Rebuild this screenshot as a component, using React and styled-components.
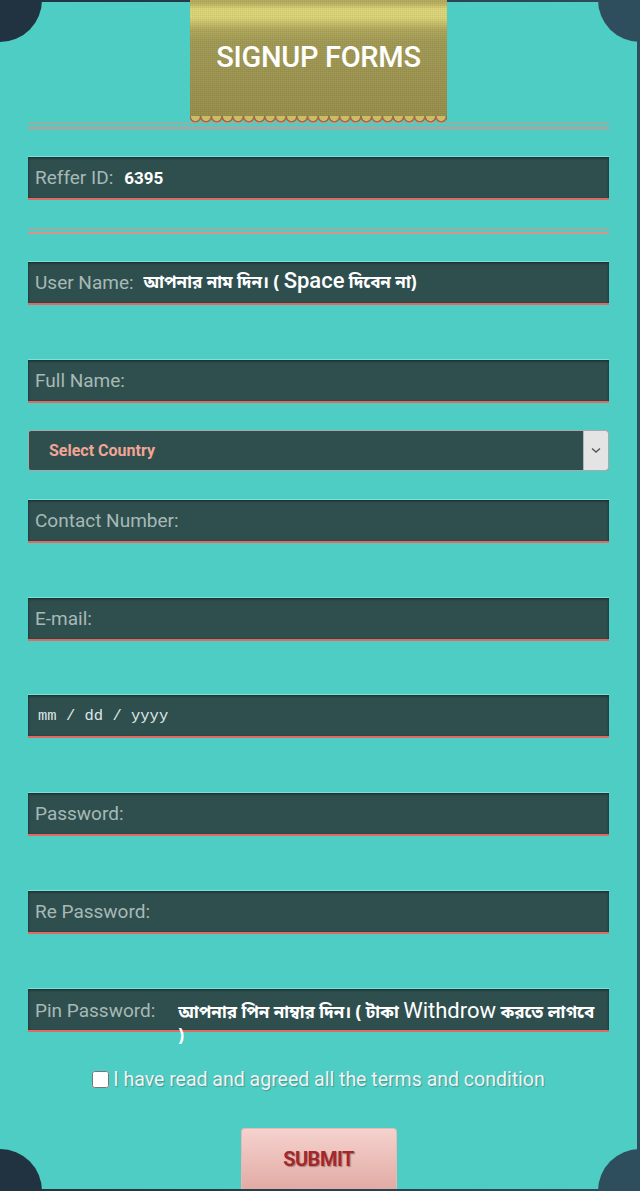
import styled, { createGlobalStyle } from "styled-components";

const GlobalStyle = createGlobalStyle`
  html, body {
    margin: 0;
    padding: 0;
  }
  body {
    background: #213340;
    font-family: Roboto, "Noto Sans", "Noto Sans Bengali", sans-serif;
  }
`;

const Page = styled.div`
  position: relative;
  width: 640px;
  height: 1191px;
  overflow: hidden;
  background: linear-gradient(90deg, #213340, #2e4d5d);
`;

const Corner = styled.span`
  position: absolute;
  width: 84px;
  height: 84px;
  border-radius: 50%;
  background: ${({ $color }) => $color};
  ${({ $v }) => $v}: -42px;
  ${({ $h }) => $h}: -42px;
`;

const Sheet = styled.div`
  box-sizing: border-box;
  display: flex;
  flex-direction: column;
  height: 1187px;
  margin: 2px 3px 0 0;
  padding: 0 28px;
  background: #4ecdc4;
`;

const Banner = styled.div`
  flex: none;
  align-self: center;
  margin-top: -2px;
  width: 257px;
  display: flex;
  flex-direction: column;
`;

const BannerBody = styled.div`
  height: 116px;
  display: flex;
  align-items: center;
  justify-content: center;
  padding-bottom: 2px;
  box-sizing: border-box;
  background:
    repeating-linear-gradient(0deg, rgba(0, 0, 0, 0.05) 0 1px, transparent 1px 2px),
    repeating-linear-gradient(90deg, rgba(0, 0, 0, 0.04) 0 1px, transparent 1px 2px),
    linear-gradient(
      180deg,
      #b6ab5e 0px,
      #c2b865 4px,
      #e2da7c 9px,
      #e0d77a 18px,
      #b4ab5e 30px,
      #a69e58 42px,
      #9c934f 116px
    );
`;

const Title = styled.h1`
  margin: 0;
  font-family: Roboto, sans-serif;
  font-size: 29px;
  font-weight: 500;
  color: #ffffff;
  letter-spacing: -0.3px;
`;

const Scallops = styled.div`
  height: 7px;
  background: radial-gradient(
      circle at 50% 10%,
      #cbbd67 0 4px,
      #a9653f 4.5px 5.5px,
      transparent 6px
    )
    0 0 / 10.7px 7px repeat-x;
`;

const DoubleRule = styled.div`
  flex: none;
  height: 3px;
  margin: 0 0 28px;
  border-top: 1px solid #d6958a;
  border-bottom: 2px solid #d6958a;
`;

const FieldBox = styled.div`
  flex: none;
  box-sizing: border-box;
  display: flex;
  align-items: ${({ $top }) => ($top ? "flex-start" : "center")};
  height: 43px;
  margin-bottom: ${({ $gap }) => ($gap === undefined ? 55 : $gap)}px;
  padding: 0 7px;
  background: #2f4f4f;
  border-bottom: 2px solid #e2695f;
  box-shadow: inset 0 1px 3px rgba(0, 0, 0, 0.5), 0 -1px 0 rgba(150, 240, 232, 0.6);
`;

const Label = styled.span`
  flex: none;
  font-size: 19px;
  color: #a7b9b6;
  white-space: nowrap;
  ${({ $top }) => ($top ? "margin-top: 10px;" : "")}
`;

const Value = styled.span`
  margin-left: 11px;
  font-size: 17px;
  font-weight: 700;
  color: #ffffff;
`;

const Input = styled.input`
  flex: 1;
  min-width: 0;
  padding: 0;
  border: none;
  outline: none;
  background: transparent;
  font-family: Roboto, sans-serif;
  font-size: 19px;
  color: #ffffff;

  &::placeholder {
    color: #a7b9b6;
  }
`;

const Hint = styled.span`
  flex: 1;
  margin-left: ${({ $offset }) => $offset}px;
  ${({ $top }) => ($top ? "margin-top: 11px;" : "")}
  font-family: "Noto Sans Bengali", "Lohit Bengali", "Noto Sans", sans-serif;
  font-size: 17px;
  font-weight: 700;
  line-height: 23px;
  color: #ffffff;
`;

const Big = styled.span`
  font-family: Roboto, sans-serif;
  font-size: 22px;
  line-height: 1;
  font-weight: ${({ $bold }) => ($bold ? 500 : 400)};
`;

const DateText = styled.span`
  margin-left: 3px;
  font-family: "Liberation Mono", monospace;
  font-size: 15.5px;
  color: #dfe6e6;
`;

const SelectBox = styled.div`
  flex: none;
  box-sizing: border-box;
  display: flex;
  height: 41px;
  margin-bottom: 29px;
  border: 1px solid #a9a9a9;
  border-radius: 3px;
  background: #2f4f4f;
  overflow: hidden;
`;

const Select = styled.select`
  flex: 1;
  appearance: none;
  border: none;
  outline: none;
  padding: 0 0 0 20px;
  background: transparent;
  font-family: Roboto, sans-serif;
  font-size: 16px;
  font-weight: 700;
  color: #f2a594;
`;

const ArrowBox = styled.span`
  flex: none;
  width: 24px;
  display: flex;
  align-items: center;
  justify-content: center;
  background: #e4e4e4;
  border-left: 1px solid #b5b5b5;
`;

const AgreeRow = styled.label`
  display: flex;
  align-items: center;
  justify-content: center;
  gap: 4px;
  margin-top: 36px;
  font-size: 19.5px;
  color: #f2f2f2;
  text-shadow: 1px 1px 1px rgba(0, 0, 0, 0.25);
`;

const Check = styled.input`
  width: 17px;
  height: 17px;
  margin: 0;
`;

const Submit = styled.button`
  align-self: center;
  width: 156px;
  height: 62px;
  margin-top: 37px;
  border: 1px solid #eab8b2;
  border-bottom: none;
  border-radius: 4px 4px 0 0;
  background: linear-gradient(180deg, #f5d2ce, #e2aba4);
  font-family: Roboto, sans-serif;
  font-size: 20px;
  font-weight: 700;
  color: #a3282b;
  text-shadow: 1px 1px 1px rgba(0, 0, 0, 0.3);
  letter-spacing: -0.5px;
`;

const Chevron = () => (
  <svg width="10" height="7" viewBox="0 0 10 7">
    <path d="M1 1.5 L5 5 L9 1.5" fill="none" stroke="#555" strokeWidth="1.4" />
  </svg>
);

const App = () => {
  return (
    <Page>
      <GlobalStyle />
      <Sheet>
        <Banner>
          <BannerBody>
            <Title>SIGNUP FORMS</Title>
          </BannerBody>
          <Scallops />
        </Banner>
        <DoubleRule />

        <FieldBox $gap={28}>
          <Label>Reffer ID:</Label>
          <Value>6395</Value>
        </FieldBox>
        <DoubleRule />

        <FieldBox>
          <Label>User Name:</Label>
          <Hint $offset={10}>
            আপনার নাম দিন। ( <Big $bold>Space</Big> দিবেন না)
          </Hint>
        </FieldBox>

        <FieldBox $gap={27}>
          <Input placeholder="Full Name:" />
        </FieldBox>

        <SelectBox>
          <Select defaultValue="">
            <option value="">Select Country</option>
          </Select>
          <ArrowBox>
            <Chevron />
          </ArrowBox>
        </SelectBox>

        <FieldBox>
          <Input placeholder="Contact Number:" />
        </FieldBox>

        <FieldBox $gap={54}>
          <Input placeholder="E-mail:" />
        </FieldBox>

        <FieldBox>
          <DateText>mm / dd / yyyy</DateText>
        </FieldBox>

        <FieldBox>
          <Input placeholder="Password:" />
        </FieldBox>

        <FieldBox>
          <Input placeholder="Re Password:" />
        </FieldBox>

        <FieldBox $top $gap={0}>
          <Label $top>Pin Password:</Label>
          <Hint $offset={23} $top>
            আপনার পিন নাম্বার দিন। ( টাকা <Big>Withdrow</Big> করতে লাগবে )
          </Hint>
        </FieldBox>

        <AgreeRow>
          <Check type="checkbox" />I have read and agreed all the terms and condition
        </AgreeRow>

        <Submit>SUBMIT</Submit>
      </Sheet>

      <Corner $v="top" $h="left" $color="#213340" />
      <Corner $v="top" $h="right" $color="#2e4d5d" />
      <Corner $v="bottom" $h="left" $color="#213340" />
      <Corner $v="bottom" $h="right" $color="#2e4d5d" />
    </Page>
  );
};

export default App;
